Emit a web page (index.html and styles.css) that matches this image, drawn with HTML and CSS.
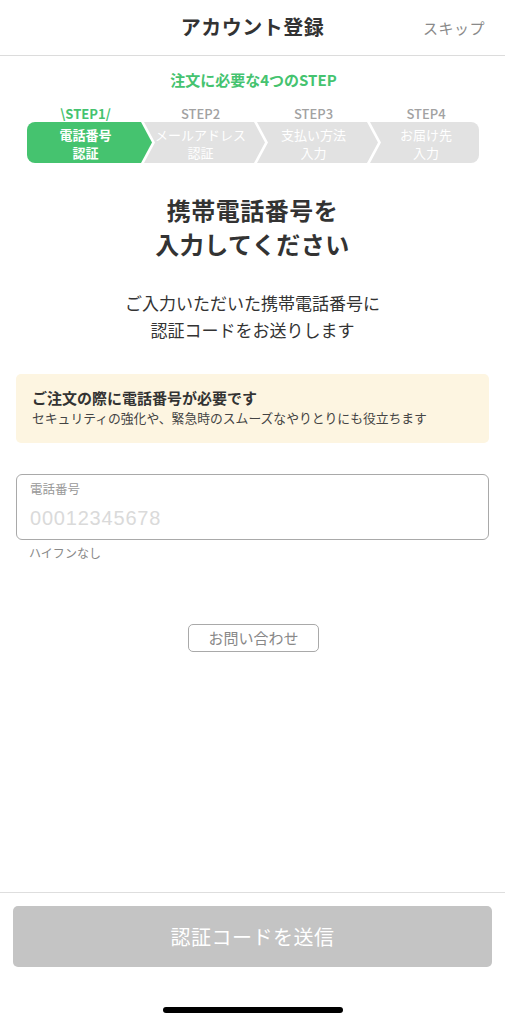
FILE: index.html
```html
<!DOCTYPE html>
<html lang="ja">
<head>
<meta charset="utf-8">
<link rel="stylesheet" href="styles.css">
</head>
<body>
<div class="page">
  <header class="header">
    <h1 class="header-title">アカウント登録</h1>
    <span class="header-skip">スキップ</span>
  </header>

  <main class="content">
    <p class="steps-title">注文に必要な4つのSTEP</p>
    <div class="steps">
      <div class="step step-first step-active">
        <div class="step-label">\STEP1/</div>
        <div class="step-box">電話番号<br>認証</div>
      </div>
      <div class="step step-mid">
        <div class="step-label">STEP2</div>
        <div class="step-box">メールアドレス<br>認証</div>
      </div>
      <div class="step step-mid">
        <div class="step-label">STEP3</div>
        <div class="step-box">支払い方法<br>入力</div>
      </div>
      <div class="step step-last">
        <div class="step-label">STEP4</div>
        <div class="step-box">お届け先<br>入力</div>
      </div>
    </div>

    <h2 class="heading">携帯電話番号を<br>入力してください</h2>
    <p class="lead">ご入力いただいた携帯電話番号に<br>認証コードをお送りします</p>

    <div class="notice">
      <p class="notice-title">ご注文の際に電話番号が必要です</p>
      <p class="notice-body">セキュリティの強化や、緊急時のスムーズなやりとりにも役立ちます</p>
    </div>

    <label class="field">
      <span class="field-label">電話番号</span>
      <input class="field-input" type="tel" placeholder="00012345678">
    </label>
    <p class="field-hint">ハイフンなし</p>

    <div class="contact-wrap">
      <button class="contact-btn" type="button">お問い合わせ</button>
    </div>
  </main>

  <footer class="footer">
    <button class="submit-btn" type="button">認証コードを送信</button>
    <div class="home-indicator"></div>
  </footer>
</div>
</body>
</html>
```

FILE: styles.css
```css
* { box-sizing: border-box; }
html, body { margin: 0; padding: 0; background: #fff; }
body {
  font-family: "Noto Sans CJK JP", "Noto Sans", sans-serif;
  color: #333;
}
p, h1, h2 { margin: 0; }

.page {
  width: 505px;
  height: 1024px;
  display: flex;
  flex-direction: column;
}

/* Header */
.header {
  height: 56px;
  border-bottom: 1px solid #dcdcdc;
  display: flex;
  align-items: center;
  justify-content: center;
  position: relative;
  padding-bottom: 2px;
}
.header-title {
  font-size: 20px;
  font-weight: 700;
  color: #333;
  letter-spacing: 0.5px;
}
.header-skip {
  position: absolute;
  right: 20px;
  top: 17px;
  font-size: 15px;
  color: #8a8a8a;
  letter-spacing: 0.5px;
}

/* Content */
.content {
  flex: 1;
  display: flex;
  flex-direction: column;
  padding: 0 16px;
}
.steps-title {
  margin-top: 14px;
  line-height: 20px;
  font-size: 15px;
  font-weight: 700;
  color: #45c36f;
  text-align: center;
  padding-left: 2px;
}

.steps {
  margin: 16px 0 0 11px;
  display: flex;
}
.step {
  display: flex;
  flex-direction: column;
  margin-left: -8px;
  width: 121px;
}
.step-first { margin-left: 0; width: 125px; }
.step-last { width: 109px; }

.step-label {
  height: 16px;
  line-height: 16px;
  font-size: 13px;
  font-weight: 500;
  color: #a2a2a2;
  text-align: center;
}
.step-active .step-label { color: #45c36f; font-weight: 700; }

.step-box {
  height: 41px;
  padding-top: 4px;
  background: #e2e2e2;
  color: #fff;
  font-size: 13px;
  line-height: 18px;
  text-align: center;
}
.step-active .step-box {
  background: #45c36f;
  font-weight: 700;
}
.step-first .step-label, .step-first .step-box { padding-right: 8px; }
.step-mid .step-label, .step-mid .step-box { padding-right: 8px; }
.step-last .step-label, .step-last .step-box { padding-left: 3px; }

.step-first .step-box {
  border-radius: 8px 0 0 8px;
  clip-path: polygon(0 0, calc(100% - 11px) 0, 100% 50%, calc(100% - 11px) 100%, 0 100%);
}
.step-mid .step-box {
  clip-path: polygon(0 0, calc(100% - 11px) 0, 100% 50%, calc(100% - 11px) 100%, 0 100%, 11px 50%);
}
.step-last .step-box {
  border-radius: 0 8px 8px 0;
  clip-path: polygon(0 0, 100% 0, 100% 100%, 0 100%, 11px 50%);
}

.heading {
  margin-top: 30px;
  font-size: 24px;
  line-height: 34px;
  font-weight: 700;
  text-align: center;
  color: #333;
  letter-spacing: 0.5px;
}
.lead {
  margin-top: 28px;
  font-size: 17px;
  line-height: 27px;
  text-align: center;
  color: #333;
}

.notice {
  margin-top: 31px;
  background: #fdf5e1;
  border-radius: 5px;
  padding: 13px 16px 16px;
}
.notice-title {
  font-size: 15px;
  line-height: 22px;
  font-weight: 700;
  color: #333;
}
.notice-body {
  font-size: 12.8px;
  line-height: 18px;
  color: #444;
}

.field {
  margin-top: 31px;
  height: 66px;
  border: 1.5px solid #a9a9a9;
  border-radius: 6px;
  padding: 6px 13px 0;
  display: flex;
  flex-direction: column;
}
.field-label {
  font-size: 12.5px;
  line-height: 16px;
  color: #999;
}
.field-input {
  margin-top: 8px;
  border: none;
  outline: none;
  padding: 0;
  height: 26px;
  font-family: "Liberation Sans", "Noto Sans", sans-serif;
  font-size: 20px;
  color: #333;
  background: transparent;
  letter-spacing: 0.8px;
}
.field-input::placeholder { color: #dadada; }

.field-hint {
  margin-top: 5px;
  padding-left: 13px;
  font-size: 12px;
  line-height: 16px;
  color: #888;
}

.contact-wrap {
  margin-top: 63px;
  display: flex;
  justify-content: center;
}
.contact-btn {
  width: 131px;
  height: 28px;
  margin-left: 2px;
  border: 1.5px solid #a9a9a9;
  border-radius: 5px;
  background: #fff;
  font-family: "Noto Sans CJK JP", sans-serif;
  font-size: 15px;
  color: #888;
  padding: 0;
  line-height: 24px;
}

/* Footer */
.footer {
  height: 132px;
  border-top: 1px solid #dedede;
  display: flex;
  flex-direction: column;
  align-items: center;
  padding-top: 13px;
}
.submit-btn {
  width: 479px;
  height: 61px;
  border: none;
  border-radius: 5px;
  background: #c4c4c4;
  color: #fff;
  font-family: "Noto Sans CJK JP", sans-serif;
  font-size: 20px;
  letter-spacing: 0.5px;
}
.home-indicator {
  margin-top: 40px;
  width: 180px;
  height: 6px;
  border-radius: 3px;
  background: #000;
}
```
